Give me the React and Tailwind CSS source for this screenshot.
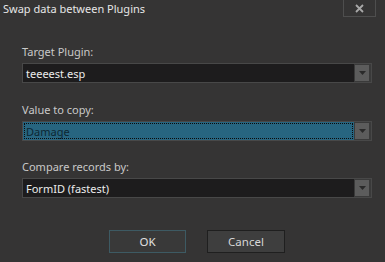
import React from 'react'

const FONT = { fontFamily: '"Noto Sans", "Open Sans", sans-serif' }

function Arrow() {
  return (
    <svg width="7" height="4" viewBox="0 0 7 4">
      <path d="M0 0 H7 L3.5 4 Z" fill="#2a2a2a" />
    </svg>
  )
}

function Combo({ value, active }) {
  return (
    <div className="flex h-[20px] w-full border border-[#484848] bg-[#3a3a3a]">
      <div
        className={
          active
            ? 'flex flex-1 items-center bg-[#276580] px-[3px] outline outline-1 outline-dotted outline-[#0b0b0b] -outline-offset-2 text-[#0d2733]'
            : 'flex flex-1 items-center bg-[#1d1c1d] px-[3px] text-[#ececec]'
        }
      >
        <span className="text-[11px] leading-none">{value}</span>
      </div>
      <div className="my-[1px] ml-[1px] mr-[2px] flex w-[14px] items-center justify-center bg-[#5c5c5c]">
        <Arrow />
      </div>
    </div>
  )
}

function Field({ label, value, active, className }) {
  return (
    <div className={className}>
      <div className="h-[16px] text-[11px] leading-[16px] text-[#c9c9c9]">{label}</div>
      <div className="mt-[3px]">
        <Combo value={value} active={active} />
      </div>
    </div>
  )
}

export default function App() {
  return (
    <div className="flex h-[262px] w-[385px] flex-col bg-[#353434]" style={FONT}>
      {/* title bar */}
      <div className="flex h-[22px] items-start justify-between">
        <div className="pl-[3px] pt-[1px] text-[11px] leading-[16px] text-[#e6e6e6]">Swap data between Plugins</div>
        <div className="mr-[9px] flex h-[17px] w-[33px] items-center justify-center border border-t-0 border-[#4e4e4e]">
          <svg width="9" height="9" viewBox="0 0 9 9">
            <path d="M1 1 L8 8 M8 1 L1 8" stroke="#a8a8a8" strokeWidth="1.8" />
          </svg>
        </div>
      </div>

      <div className="flex flex-col pl-[22px] pr-[13px] pt-[22px]">
        <Field label="Target Plugin:" value="teeeest.esp" />
        <Field className="mt-[19px]" label="Value to copy:" value="Damage" active />
        <Field className="mt-[18px]" label="Compare records by:" value="FormID (fastest)" />
      </div>

      <div className="mt-[32px] flex gap-[21px] pl-[109px]">
        <button className="h-[23px] w-[77px] border border-[#3d5a63] bg-[#393939] text-[11.5px] text-[#e0e0e0]">
          OK
        </button>
        <button className="h-[23px] w-[78px] border border-[#1f1f1f] bg-[#3e3e3e] text-[11.5px] text-[#d6d6d6]">
          Cancel
        </button>
      </div>
    </div>
  )
}
